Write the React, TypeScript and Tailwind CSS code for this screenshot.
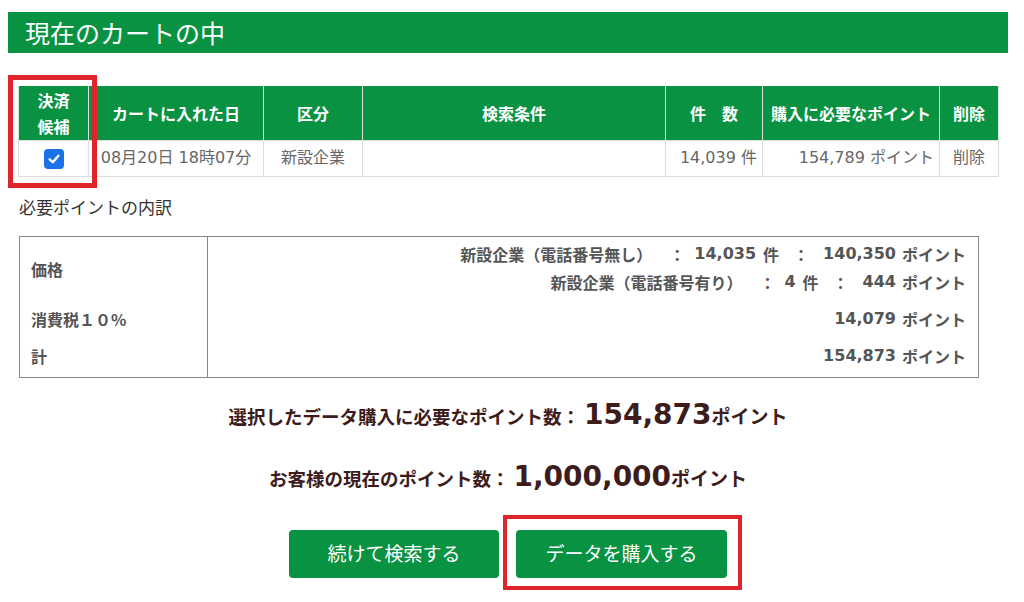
const jp = "font-['Noto_Sans_CJK_JP',sans-serif]";
const num = "font-['DejaVu_Sans','Noto_Sans_CJK_JP',sans-serif]";

const headers = [
  { label: "決済\n候補", w: "w-[70px]" },
  { label: "カートに入れた日", w: "w-[175px]" },
  { label: "区分", w: "w-[99px]" },
  { label: "検索条件", w: "w-[303px]" },
  { label: "件　数", w: "w-[97px]" },
  { label: "購入に必要なポイント", w: "w-[177px]" },
  { label: "削除", w: "w-[59px]" },
];

function CheckBox() {
  return (
    <span className="inline-flex h-5 w-5 items-center justify-center rounded-[4px] bg-[#1b72e8] align-middle">
      <svg viewBox="0 0 20 20" className="h-4 w-4">
        <polyline
          points="4.5,10.5 8.5,14 15.5,6"
          fill="none"
          stroke="white"
          strokeWidth="3"
          strokeLinecap="round"
          strokeLinejoin="round"
        />
      </svg>
    </span>
  );
}

function CartTable() {
  return (
    <div className="relative ml-[18px] mt-[33px] w-[980px]">
      <table className="w-[980px] table-fixed border-collapse">
        <thead>
          <tr className="h-[54px] bg-[#0a9243]">
            {headers.map((h) => (
              <th
                key={h.label}
                className={`${h.w} whitespace-pre-line border-x border-[#d8e8dc] px-0 text-center text-[16px] font-bold leading-[26px] text-white`}
              >
                {h.label}
              </th>
            ))}
          </tr>
        </thead>
        <tbody>
          <tr className={`${num} h-[36px] text-[16px] text-[#666]`}>
            <td className="border border-[#dddddd] text-center">
              <CheckBox />
            </td>
            <td className="whitespace-nowrap border border-[#dddddd] text-center">08月20日 18時07分</td>
            <td className="border border-[#dddddd] text-center">新設企業</td>
            <td className="border border-[#dddddd]"></td>
            <td className="whitespace-nowrap border border-[#dddddd] pr-[5px] text-right">14,039 件</td>
            <td className="whitespace-nowrap border border-[#dddddd] pr-[5px] text-right">154,789 ポイント</td>
            <td className="border border-[#dddddd] text-center">削除</td>
          </tr>
        </tbody>
      </table>
      {/* 強調枠 */}
      <div className="pointer-events-none absolute left-[-10px] top-[-11px] h-[113px] w-[89px] border-[5px] border-[#e0242c]" />
    </div>
  );
}

function PriceLine({ kind, count, points }: { kind: string; count: string; points: string }) {
  return (
    <div className="flex justify-end whitespace-nowrap">
      <span className={jp}>新設企業（電話番号{kind}）</span>
      <span className={`${jp} inline-block w-[42px] pl-[8px] text-center`}>：</span>
      <span className={num}>{count}</span>
      <span className={`${jp} ml-[7px]`}>件</span>
      <span className={`${jp} inline-block w-[44px] text-center`}>：</span>
      <span className={num}>{points}</span>
      <span className={`${jp} ml-[6px]`}>ポイント</span>
    </div>
  );
}

function Breakdown() {
  return (
    <div className="ml-[19px] mt-[17px] w-[960px] border border-[#888] text-[16px] font-bold text-[#555]">
      <div className="flex h-[64px]">
        <div className={`${jp} flex w-[188px] shrink-0 items-center border-r border-[#888] pl-[11px]`}>価格</div>
        <div className="flex-1 pr-[12px] pt-[3px] leading-[28px]">
          <PriceLine kind="無し" count="14,035" points="140,350" />
          <PriceLine kind="有り" count="4" points="444" />
        </div>
      </div>
      <div className="flex h-[37px]">
        <div className={`${jp} flex w-[188px] shrink-0 items-center border-r border-[#888] pl-[11px]`}>消費税１０%</div>
        <div className="flex flex-1 items-center justify-end pr-[12px]">
          <span className={num}>14,079</span>
          <span className={`${jp} ml-[6px]`}>ポイント</span>
        </div>
      </div>
      <div className="flex h-[39px]">
        <div className={`${jp} flex w-[188px] shrink-0 items-center border-r border-[#888] pb-[2px] pl-[11px]`}>計</div>
        <div className="flex flex-1 items-center justify-end pb-[2px] pr-[12px]">
          <span className={num}>154,873</span>
          <span className={`${jp} ml-[6px]`}>ポイント</span>
        </div>
      </div>
    </div>
  );
}

function PointLine({ label, value, className }: { label: string; value: string; className: string }) {
  return (
    <div className={`flex h-[40px] w-[1000px] items-baseline justify-center font-bold text-[#3d1c1c] ${className}`}>
      <span className={`${jp} text-[18.5px]`}>{label}</span>
      <span className={`${num} ml-[4px] text-[28px] leading-[40px]`}>{value}</span>
      <span className={`${jp} text-[19px]`}>ポイント</span>
    </div>
  );
}

export default function App() {
  return (
    <div className={`${jp} relative h-[602px] w-[1024px] overflow-hidden bg-white [text-spacing-trim:space-all]`}>
      <div className="ml-2 mt-3 flex h-[41px] w-[1000px] items-center bg-[#0a9243] pl-[17px] text-[25px] leading-none text-white">
        現在のカートの中
      </div>

      <CartTable />

      <div className="ml-[19px] mt-[18px] h-6 text-[17px] leading-6 text-[#333]">必要ポイントの内訳</div>

      <Breakdown />

      <div className="ml-2">
        <PointLine label="選択したデータ購入に必要なポイント数：" value="154,873" className="mt-[17px]" />
        <PointLine label="お客様の現在のポイント数：" value="1,000,000" className="mt-[22px]" />

        <div className="mt-[33px] flex w-[1000px] justify-center gap-[17px]">
          <button
            type="button"
            className="h-[48px] w-[210px] rounded-[4px] bg-[#0a9243] text-[19px] text-white"
          >
            続けて検索する
          </button>
          <div className="relative">
            <button
              type="button"
              className="h-[48px] w-[211px] rounded-[4px] bg-[#0a9243] text-[19px] text-white"
            >
              データを購入する
            </button>
            <div className="pointer-events-none absolute bottom-[-12px] left-[-13px] right-[-15px] top-[-15px] border-[4px] border-[#e0242c]" />
          </div>
        </div>
      </div>
    </div>
  );
}
